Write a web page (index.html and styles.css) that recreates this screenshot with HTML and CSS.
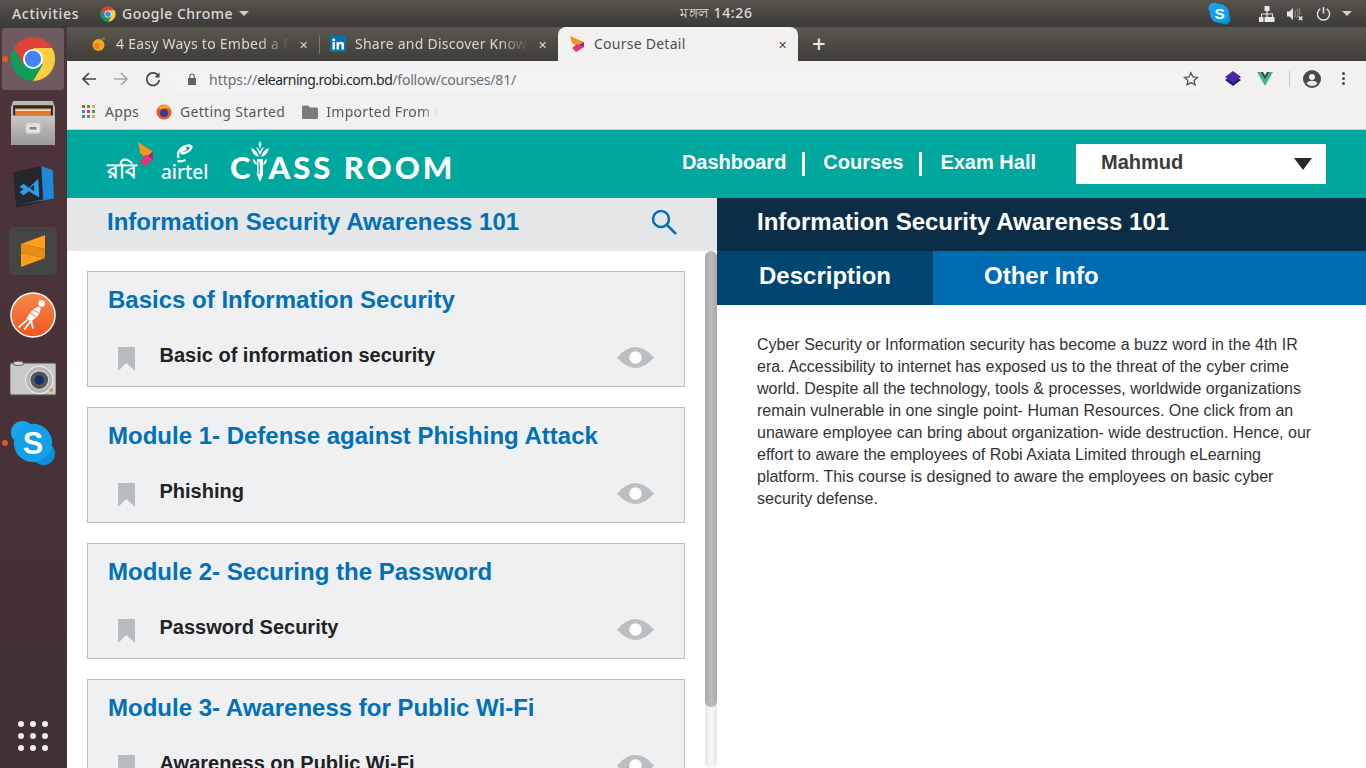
FILE: index.html
```html
<!DOCTYPE html>
<html lang="en">

<head>
    <meta charset="utf-8">
    <title>Course Detail</title>
    <link rel="stylesheet" href="styles.css">
</head>

<body>
    <div class="topbar">
        <span class="activities">Activities</span>
        <span class="appname">
            <svg class="chrome-small" viewBox="0 0 48 48"><use href="#chrome-logo"/></svg>
            Google Chrome
            <i class="caret"></i>
        </span>
        <span class="clock">মঙ্গল 14:26</span>
        <div class="tray">
            <svg class="tray-skype" viewBox="0 0 48 48"><use href="#skype-logo"/><text x="24" y="35" text-anchor="middle" class="skype-s">S</text></svg>
            <svg class="tray-net" viewBox="0 0 16 16" fill="#e8e8e8"><path d="M5.500 0h5v5H8.600v2.500H14V11h1.500v5h-5v-5H13V8.500H8.600V11H10.500v5h-5v-5h1.900V8.500H3V11h1.500v5h-5v-5H2V7.500h5.400V5H5.500z"/></svg>
            <svg class="tray-sound" viewBox="0 0 20 16"><path d="M0 5h3l4-4v14l-4-4H0z" fill="#e8e8e8"/><path d="M9 4q2 4 0 8M11.500 2q3 6 0 11M14 1q2 4 1 8" stroke="#8a8a84" stroke-width="1.300" fill="none"/><path d="M14 11l4 4M18 11l-4 4" stroke="#e8e8e8" stroke-width="1.800"/></svg>
            <svg class="tray-power" viewBox="0 0 16 16" fill="none" stroke="#e8e8e8" stroke-width="1.500"><path d="M4.500 3a6.500 6.500 0 1 0 7 0M8 1v7"/></svg>
            <i class="caret"></i>
        </div>
    </div>

    <div class="desktop">
        <div class="dock">
            <div class="dock-item active">
                <i class="running"></i>
                <svg class="dock-icon" viewBox="0 0 48 48"><use href="#chrome-logo"/></svg>
            </div>
            <div class="dock-item">
                <svg class="dock-icon" viewBox="0 0 44 44">
                    <defs><linearGradient id="cabinet" x1="0" y1="0" x2="0" y2="1"><stop offset="0" stop-color="#c9c8c6"/><stop offset="1" stop-color="#9c9a98"/></linearGradient></defs>
                    <path d="M3 1h38l2 6v36H1V7z" fill="#b9b8b6"/>
                    <rect x="3" y="5" width="38" height="10" fill="#2b2a28"/>
                    <rect x="5" y="8" width="34" height="7" fill="#e2792f"/>
                    <rect x="5" y="9" width="34" height="1.500" fill="#f6e3c8"/>
                    <rect x="1" y="15" width="42" height="28" rx="2" fill="url(#cabinet)"/>
                    <rect x="15" y="22" width="14" height="10" rx="2" fill="#dcdbd9"/>
                    <rect x="18" y="25" width="8" height="4" fill="#8b8987" stroke="#fff"/>
                </svg>
            </div>
            <div class="dock-item">
                <svg class="dock-icon" viewBox="0 0 44 44">
                    <path d="M3 8l27-6 1 34-25 6z" fill="#25282b"/>
                    <path d="M30 2l11 4 1 27-34 6 24-5z" fill="#1f88d8"/>
                    <path d="M9 22l4-3 5 4 9-9 1 18-10-6-5 4-4-3 4-3z" fill="#2f9ae8"/>
                    <path d="M23 20v6l-4-3z" fill="#25282b"/>
                </svg>
            </div>
            <div class="dock-item">
                <div class="sublime-tile">
                    <svg viewBox="0 0 48 48">
                        <path d="M12 17L36 8v14z" fill="#ff9d1c"/>
                        <path d="M12 17v9l24 5v-9z" fill="#e88c18"/>
                        <path d="M12 26l24 5-24 9z" fill="#ff9d1c"/>
                    </svg>
                </div>
            </div>
            <div class="dock-item">
                <svg class="dock-icon" viewBox="0 0 48 48">
                    <defs><linearGradient id="postman" x1="0" y1="0" x2="0" y2="1"><stop offset="0" stop-color="#f58a4a"/><stop offset="1" stop-color="#f1541f"/></linearGradient></defs>
                    <circle cx="24" cy="24" r="23" fill="url(#postman)" stroke="#fff" stroke-width="1.500"/>
                    <circle cx="33" cy="12" r="3.500" fill="#fff"/>
                    <path d="M30 15q-6 2-10 8l-3 5 5 3 7-6q3-4 3-8z" fill="#fff"/>
                    <path d="M21 17l9 5M19 20l8 6" stroke="#f4733a" stroke-width="1"/>
                    <path d="M18 29L9 37M21 31l-6 8M22 30l2 8" stroke="#fff" stroke-width="1.800" fill="none"/>
                </svg>
            </div>
            <div class="dock-item">
                <svg class="dock-icon" viewBox="0 0 44 44">
                    <rect x="0" y="7" width="44" height="30" rx="2" fill="#c9c9c9" stroke="#7a7a7a"/>
                    <ellipse cx="8" cy="7" rx="5" ry="2" fill="#d8d8d8" stroke="#666"/>
                    <circle cx="28" cy="23" r="13" fill="#b5b5b5" stroke="#eee"/>
                    <circle cx="28" cy="23" r="9" fill="#555" stroke="#ddd"/>
                    <circle cx="28" cy="23" r="4.500" fill="#0c2f6e"/>
                    <rect x="38" y="31" width="3" height="3" fill="#e09020"/>
                </svg>
            </div>
            <div class="dock-item">
                <i class="running"></i>
                <svg class="dock-icon" viewBox="0 0 48 48"><use href="#skype-logo"/><text x="24" y="35" text-anchor="middle" class="skype-s">S</text></svg>
            </div>
            <div class="dock-grid">
                <i></i><i></i><i></i><i></i><i></i><i></i><i></i><i></i><i></i>
            </div>
        </div>

        <div class="browser">
            <div class="tabstrip">
                <div class="tab tab-first">
                    <svg class="favicon" viewBox="0 0 16 16"><circle cx="7.500" cy="9" r="6" fill="#f5a623"/><circle cx="6" cy="10" r="3" fill="#ef7d1a"/><path d="M9 3q3-2 6-1-2 3-6 1z" fill="#6a9a2a"/></svg>
                    <span class="tab-title">4 Easy Ways to Embed a P</span>
                    <span class="tab-close">✕</span>
                </div>
                <div class="tab">
                    <svg class="favicon" viewBox="0 0 16 16"><rect width="16" height="16" fill="#0073b1"/><rect x="2.500" y="6" width="2.500" height="7.500" fill="#fff"/><circle cx="3.700" cy="3.700" r="1.500" fill="#fff"/><path d="M6.500 6H9v1q1-1.300 2.500-1.200 2.500.1 2.500 3v4.700h-2.500V9.500q0-1.600-1.300-1.600-1.200 0-1.200 1.600v4H6.500z" fill="#fff"/></svg>
                    <span class="tab-title">Share and Discover Know</span>
                    <span class="tab-close">✕</span>
                </div>
                <div class="tab tab-active">
                    <svg class="favicon" viewBox="0 0 16 16"><use href="#robi-mark"/></svg>
                    <span class="tab-title">Course Detail</span>
                    <span class="tab-close">✕</span>
                </div>
                <span class="new-tab">+</span>
            </div>

            <div class="toolbar">
                <svg class="tool" viewBox="0 0 16 16" fill="none" stroke="#454545" stroke-width="1.700"><path d="M15 8H2M8 2L2 8l6 6"/></svg>
                <svg class="tool" viewBox="0 0 16 16" fill="none" stroke="#a9a9a9" stroke-width="1.700"><path d="M1 8h13M8 2l6 6-6 6"/></svg>
                <svg class="tool" viewBox="0 0 16 16" fill="none" stroke="#454545" stroke-width="1.700"><path d="M13.500 5A6.300 6.300 0 1 0 14.300 9"/><path d="M14.500 1.500v5h-5z" fill="#454545" stroke="none"/></svg>
                <div class="omnibox">
                    <svg class="lock" viewBox="0 0 10 12" fill="#5f6368"><path d="M1 5h8v7H1z"/><path d="M2.800 5V3.200a2.200 2.200 0 0 1 4.400 0V5" fill="none" stroke="#5f6368" stroke-width="1.200"/></svg>
                    <span class="url">https://<b>elearning.robi.com.bd</b><span class="url-path">/follow/courses/81/</span></span>
                    <svg class="star" viewBox="0 0 16 16" fill="none" stroke="#555" stroke-width="1.300"><path d="M8 1.800l1.900 4.100 4.500.5-3.300 3 .9 4.400L8 11.600l-4 2.200.9-4.400-3.300-3 4.500-.5z"/></svg>
                </div>
                <svg class="ext-stack" viewBox="0 0 16 16"><path d="M8 4l8 5-8 6-8-6z" fill="#241a6b"/><path d="M8 0l8 6-8 6-8-6z" fill="#4b27a8"/></svg>
                <svg class="ext-vue" viewBox="0 0 16 14"><path d="M0 0h3.500L8 8l4.500-8H16L8 14z" fill="#41b883"/><path d="M3.500 0H6l2 3.500L10 0h2.500L8 8z" fill="#35495e"/></svg>
                <i class="tool-sep"></i>
                <svg class="avatar" viewBox="0 0 18 18"><circle cx="9" cy="9" r="9" fill="#4a4a4a"/><circle cx="9" cy="7" r="3" fill="#f2f1f0"/><path d="M3.500 13.500Q5 10.800 9 10.800t5.500 2.700Q12 16 9 16t-5.500-2.500z" fill="#f2f1f0"/></svg>
                <span class="menu-dots"><i></i><i></i><i></i></span>
            </div>

            <div class="bookmarks">
                <span class="bookmark">
                    <span class="apps-grid">
                        <i class="r"></i><i class="g"></i><i class="y"></i>
                        <i class="b"></i><i class="r"></i><i class="g"></i>
                        <i class="g"></i><i class="b"></i><i class="y"></i>
                    </span>
                    Apps
                </span>
                <span class="bookmark">
                    <svg class="bm-icon" viewBox="0 0 16 16"><circle cx="8" cy="8" r="7.500" fill="#e8562a"/><circle cx="8" cy="9" r="4" fill="#3b3f8f"/><path d="M2 4q3-3.500 8-3 4 1 5 6-2-3-5-3-3 1-5 1z" fill="#f9a825"/></svg>
                    Getting Started
                </span>
                <span class="bookmark bookmark-fade">
                    <svg class="bm-icon" viewBox="0 0 16 14" fill="#7b7b7b"><path d="M0 2q0-1.500 1.500-1.500H6L8 2.500h6.500Q16 2.500 16 4v8.500q0 1.500-1.500 1.500h-13Q0 14 0 12.500z"/></svg>
                    Imported From F
                </span>
            </div>

            <div class="site">
                <div class="site-header">
                    <div class="logo">
                        <div class="logo-robi">
                            <svg class="robi-mark" viewBox="0 0 16 16" preserveAspectRatio="none"><use href="#robi-mark"/></svg>
                            <span class="robi-name">রবি</span>
                        </div>
                        <div class="logo-airtel">
                            <svg class="airtel-swoosh" viewBox="0 0 18 20" fill="none" stroke="#fff" stroke-width="2.400"><path d="M3 14Q1 7 8 3q6-3 8 0-1 4-7 6-3 1-3-1 1-3 5-3"/><path d="M2 17q4 1 8-1"/></svg>
                            <span class="airtel-name">airtel</span>
                        </div>
                        <div class="logo-class">
                            C<svg class="pencil" viewBox="0 0 20 42" fill="#fff"><path d="M7 18h6v16l-3 7-3-7z"/><path d="M8.500 21h1.200v12H8.500z" fill="#00a79d"/><path d="M10 14L6 6q3 1 4 5 1-4 4-5z"/><path d="M9 16Q3 15 1 7q6 2 8 9zM11 16q6-1 8-9-6 2-8 9z"/><path d="M10 8L8.500 3 10 0l1.500 3z"/><path d="M3 18q3 1 4 6-4-1-4-6zM17 18q-3 1-4 6 4-1 4-6z"/></svg>ASS ROOM
                        </div>
                    </div>
                    <nav class="nav">
                        <a>Dashboard</a>
                        <a>Courses</a>
                        <a>Exam Hall</a>
                    </nav>
                    <div class="user-select">
                        Mahmud
                        <i class="user-arrow"></i>
                    </div>
                </div>

                <div class="course">
                    <div class="left">
                        <div class="left-head">
                            <h2>Information Security Awareness 101</h2>
                            <svg class="search" viewBox="0 0 26 26" fill="none" stroke="#0071b9" stroke-width="2.500"><circle cx="10" cy="10" r="8"/><path d="M16 16l9 9"/></svg>
                        </div>
                        <div class="left-body">
                            <div class="modules">
                                <div class="module">
                                    <h3>Basics of Information Security</h3>
                                    <div class="lesson">
                                        <svg class="mark"><use href="#bookmark"/></svg>
                                        <span>Basic of information security</span>
                                        <svg class="eye"><use href="#eye"/></svg>
                                    </div>
                                </div>
                                <div class="module">
                                    <h3>Module 1- Defense against Phishing Attack</h3>
                                    <div class="lesson">
                                        <svg class="mark"><use href="#bookmark"/></svg>
                                        <span>Phishing</span>
                                        <svg class="eye"><use href="#eye"/></svg>
                                    </div>
                                </div>
                                <div class="module">
                                    <h3>Module 2- Securing the Password</h3>
                                    <div class="lesson">
                                        <svg class="mark"><use href="#bookmark"/></svg>
                                        <span>Password Security</span>
                                        <svg class="eye"><use href="#eye"/></svg>
                                    </div>
                                </div>
                                <div class="module">
                                    <h3>Module 3- Awareness for Public Wi-Fi</h3>
                                    <div class="lesson">
                                        <svg class="mark"><use href="#bookmark"/></svg>
                                        <span>Awareness on Public Wi-Fi</span>
                                        <svg class="eye"><use href="#eye"/></svg>
                                    </div>
                                </div>
                            </div>
                            <div class="scroll-track"><div class="scroll-thumb"></div></div>
                        </div>
                    </div>

                    <div class="right">
                        <div class="right-head">Information Security Awareness 101</div>
                        <div class="right-tabs">
                            <div class="right-tab selected">Description</div>
                            <div class="right-tab">Other Info</div>
                        </div>
                        <p class="desc">Cyber Security or Information security has become a buzz word in the 4th IR era. Accessibility to internet has exposed us to the threat of the cyber crime world. Despite all the technology, tools &amp; processes, worldwide organizations remain vulnerable in one single point- Human Resources. One click from an unaware employee can bring about organization- wide destruction. Hence, our effort to aware the employees of Robi Axiata Limited through eLearning platform. This course is designed to aware the employees on basic cyber security defense.</p>
                    </div>
                </div>
            </div>
        </div>
    </div>

    <svg class="defs" width="0" height="0">
        <symbol id="chrome-logo" viewBox="0 0 48 48">
            <path d="M4.100 12.500A23 23 0 0 1 43.900 12.500H24L14 29.750z" fill="#db4437"/>
            <path d="M43.900 12.500A23 23 0 0 1 24 47L34 29.750 24 12.500z" fill="#ffcd40"/>
            <path d="M24 47A23 23 0 0 1 4.100 12.500L14 29.750H34z" fill="#0f9d58"/>
            <circle cx="24" cy="24" r="10.500" fill="#fff"/>
            <circle cx="24" cy="24" r="8.500" fill="#4285f4"/>
        </symbol>
        <symbol id="skype-logo" viewBox="0 0 48 48">
            <circle cx="13" cy="13" r="12" fill="#1ba6ea"/>
            <circle cx="35" cy="35" r="12" fill="#0b8fdc"/>
            <circle cx="24" cy="24" r="20" fill="#12a0e6"/>
        </symbol>
        <symbol id="robi-mark" viewBox="0 0 16 16">
            <path d="M1 0l14 6-7 4-5-3z" fill="#f7941d"/>
            <path d="M15 6v5L8 10z" fill="#8e2f7c"/>
            <path d="M3 12l5-4 7 3-8 5z" fill="#e6317c"/>
        </symbol>
        <symbol id="bookmark" viewBox="0 0 17 24">
            <path d="M0 0h17v24l-8.500-8L0 24z" fill="#b9bcbf"/>
        </symbol>
        <symbol id="eye" viewBox="0 0 37 21">
            <path d="M0 10.500Q9 0 18.500 0T37 10.500Q28 21 18.500 21T0 10.500z" fill="#bcbfc1"/>
            <circle cx="18.500" cy="10.500" r="6.200" fill="#fff"/>
        </symbol>
    </svg>
</body>

</html>
```

FILE: styles.css
```css
*{
    box-sizing: border-box;
}

html, body{
    margin: 0;
    height: 768px;
    overflow: hidden;
}

body{
    font-family: "Liberation Sans", Arial, sans-serif;
    background-color: #fff;
}

i{
    display: block;
}

.defs{
    display: block;
    height: 0;
}

.skype-s{
    font-family: "Liberation Sans", Arial, sans-serif;
    font-size: 32px;
    font-weight: bold;
    fill: #fff;
}

/* ubuntu top bar */
.topbar{
    height: 27px;
    display: flex;
    align-items: center;
    position: relative;
    padding-left: 12px;
    background: linear-gradient(#57544c, #3b3a35);
    color: #dcdcd8;
    font-family: "Noto Sans", sans-serif;
    font-size: 14px;
    font-weight: 500;
}

.activities{
    width: 88px;
    letter-spacing: 0.7px;
}

.appname{
    display: flex;
    align-items: center;
    letter-spacing: 0.5px;
}

.chrome-small{
    width: 16px;
    height: 16px;
    margin-right: 6px;
}

.caret{
    width: 0;
    height: 0;
    margin-left: 6px;
    border-left: 5px solid transparent;
    border-right: 5px solid transparent;
    border-top: 5px solid #d0d0cc;
}

.clock{
    position: absolute;
    left: 680px;
    top: 2px;
    font-size: 14px;
    letter-spacing: 0.7px;
}

.tray{
    margin-left: auto;
    display: flex;
    align-items: center;
    padding-right: 14px;
}

.tray-skype{
    width: 23px;
    height: 23px;
    margin-right: 28px;
}

.tray-net{
    width: 16px;
    height: 16px;
    margin-right: 12px;
}

.tray-sound{
    width: 17px;
    height: 16px;
    margin-right: 12px;
}

.tray-power{
    width: 15px;
    height: 15px;
    margin-right: 5px;
}

/* launcher */
.desktop{
    display: flex;
    height: 741px;
}

.dock{
    width: 67px;
    flex-shrink: 0;
    display: flex;
    flex-direction: column;
    background: linear-gradient(#4e333a, #413137);
}

.dock-item{
    height: 64px;
    padding-right: 1px;
    display: flex;
    align-items: center;
    justify-content: center;
    position: relative;
}

.dock-item.active{
    width: 62px;
    margin-left: 2px;
    height: 62px;
    margin-top: 1px;
    margin-bottom: 1px;
    padding-right: 0;
    border-radius: 3px;
    background-color: #6f5a5e;
}

.dock-icon{
    width: 46px;
    height: 46px;
}

.running{
    position: absolute;
    left: 2px;
    top: 50%;
    width: 6px;
    height: 6px;
    margin-top: -3px;
    border-radius: 50%;
    background-color: #e95420;
}

.dock-item.active .running{
    left: 0;
}

.sublime-tile{
    width: 48px;
    height: 48px;
    border-radius: 5px;
    background-color: #454544;
}

.sublime-tile svg{
    display: block;
    width: 48px;
    height: 48px;
}

.dock-grid{
    margin-top: auto;
    margin-left: 18px;
    margin-bottom: 17px;
    width: 30px;
    display: grid;
    grid-template-columns: repeat(3, 6px);
    gap: 6px;
}

.dock-grid i{
    width: 6px;
    height: 6px;
    border-radius: 50%;
    background-color: #eee;
}

/* chrome */
.browser{
    flex: 1;
    min-width: 0;
    display: flex;
    flex-direction: column;
}

.tabstrip{
    height: 34px;
    flex-shrink: 0;
    display: flex;
    align-items: flex-end;
    padding-left: 14px;
    background: linear-gradient(#5b584f, #3e3d37);
    font-family: "Noto Sans", sans-serif;
    font-size: 14px;
    letter-spacing: 0.25px;
    color: #dad9d5;
}

.tab{
    width: 239px;
    height: 34px;
    display: flex;
    align-items: center;
    padding: 0 9px 0 10px;
    position: relative;
}

.tab-first::after{
    content: "";
    position: absolute;
    right: 0;
    top: 8px;
    width: 1px;
    height: 19px;
    background-color: #77756d;
}

.favicon{
    width: 16px;
    height: 16px;
    flex-shrink: 0;
    margin-right: 9px;
}

.tab-title{
    flex: 1;
    margin-top: -2px;
    white-space: nowrap;
    -webkit-mask-image: linear-gradient(90deg, #000 80%, transparent 97%);
    mask-image: linear-gradient(90deg, #000 80%, transparent 97%);
}

.tab-close{
    width: 16px;
    font-size: 11px;
    letter-spacing: 0;
    text-align: center;
    color: #d5d4d0;
}

.tab-active{
    width: 240px;
    margin-left: -1px;
    border-radius: 8px 8px 0 0;
    background-color: #f2f1f0;
    color: #4a4f55;
    padding-left: 11px;
    padding-right: 8px;
}

.tab-active .tab-title{
    -webkit-mask-image: none;
    mask-image: none;
}

.tab-active .tab-close{
    color: #4a4a4a;
}

.new-tab{
    height: 34px;
    margin-left: 14px;
    font-size: 24px;
    line-height: 33px;
    font-weight: 500;
    color: #e8e8e6;
}

.toolbar{
    height: 35px;
    flex-shrink: 0;
    display: flex;
    align-items: center;
    padding-left: 14px;
    background-color: #f2f1f0;
}

.tool{
    width: 16px;
    height: 16px;
    margin-right: 16px;
}

.omnibox{
    width: 1042px;
    height: 26px;
    margin-left: -11px;
    padding: 0 9px 0 21px;
    display: flex;
    align-items: center;
    border-radius: 13px;
    background-color: #f1f3f4;
}

.lock{
    width: 10px;
    height: 12px;
    margin-right: 12px;
}

.url{
    flex: 1;
    padding-top: 1px;
    font-family: "Noto Sans", sans-serif;
    font-size: 14px;
    color: #6b7074;
}

.url b{
    font-weight: normal;
    color: #25282b;
    letter-spacing: -0.5px;
}

.url-path{
    letter-spacing: -0.2px;
}

.star{
    width: 16px;
    height: 16px;
    margin-right: 0;
}

.ext-stack{
    width: 16px;
    height: 16px;
    margin-left: 17px;
}

.ext-vue{
    width: 16px;
    height: 14px;
    margin-left: 16px;
}

.tool-sep{
    width: 1px;
    height: 16px;
    margin-left: 16px;
    background-color: #c8c8c6;
}

.avatar{
    width: 18px;
    height: 18px;
    margin-left: 13px;
}

.menu-dots{
    margin-left: 21px;
    display: flex;
    flex-direction: column;
    gap: 2px;
}

.menu-dots i{
    width: 3px;
    height: 3px;
    border-radius: 50%;
    background-color: #4a4a4a;
}

.bookmarks{
    height: 34px;
    flex-shrink: 0;
    display: flex;
    align-items: center;
    padding: 0 0 2px 15px;
    background-color: #f2f1f0;
    border-bottom: 1px solid #d0d0ce;
    font-family: "Noto Sans", sans-serif;
    font-size: 14px;
    letter-spacing: 0.3px;
    color: #555a5e;
}

.bookmark{
    display: flex;
    align-items: center;
    margin-right: 17px;
    white-space: nowrap;
}

.bookmark-fade{
    width: 136px;
    -webkit-mask-image: linear-gradient(90deg, #000 88%, transparent 100%);
    mask-image: linear-gradient(90deg, #000 88%, transparent 100%);
}

.apps-grid{
    width: 14px;
    display: grid;
    grid-template-columns: repeat(3, 3px);
    gap: 2px;
    margin-right: 9px;
}

.apps-grid i{
    height: 3px;
}

.apps-grid .r{ background-color: #e0452f; }
.apps-grid .g{ background-color: #2fa55a; }
.apps-grid .y{ background-color: #f4a92a; }
.apps-grid .b{ background-color: #3f7fe0; }

.bm-icon{
    width: 16px;
    height: 16px;
    flex-shrink: 0;
    margin-right: 8px;
}

/* the site */
.site{
    flex: 1;
    min-height: 0;
    display: flex;
    flex-direction: column;
}

.site-header{
    height: 68px;
    flex-shrink: 0;
    display: flex;
    align-items: center;
    padding: 0 40px;
    background-color: #00a79d;
    color: #fff;
}

.logo{
    display: flex;
    align-items: flex-end;
    height: 50px;
    margin-top: -11px;
}

.logo-robi{
    width: 54px;
    display: flex;
    flex-direction: column;
}

.robi-mark{
    width: 17px;
    height: 25px;
    margin-left: 30px;
    margin-bottom: -11px;
}

.robi-name{
    font-family: "Noto Sans", sans-serif;
    font-size: 21px;
    line-height: 28px;
    font-weight: bold;
}

.logo-airtel{
    width: 69px;
    display: flex;
    flex-direction: column;
}

.airtel-swoosh{
    width: 19px;
    height: 20px;
    margin-left: 14px;
    margin-bottom: -3px;
}

.airtel-name{
    font-family: "Noto Sans", sans-serif;
    font-size: 19px;
    line-height: 22px;
    font-weight: 500;
    margin-bottom: 1px;
}

.logo-class{
    display: flex;
    align-items: flex-end;
    font-family: "Lato", sans-serif;
    font-size: 31px;
    line-height: 34px;
    font-weight: 900;
    letter-spacing: 3px;
    white-space: nowrap;
}

.pencil{
    width: 20px;
    height: 42px;
    margin: 0 -2px 1px -3px;
}

.nav{
    margin-left: auto;
    display: flex;
    font-size: 20px;
    font-weight: bold;
}

.nav a{
    height: 24px;
    padding-right: 16px;
    margin-right: 18px;
    border-right: 3px solid #fff;
    line-height: 20px;
}

.nav a:last-child{
    border-right: none;
    padding-right: 0;
    margin-right: 40px;
}

.user-select{
    width: 250px;
    height: 40px;
    display: flex;
    align-items: center;
    justify-content: space-between;
    padding: 0 14px 4px 25px;
    background-color: #fff;
    color: #3d3a3a;
    font-size: 20px;
    font-weight: bold;
}

.user-arrow{
    width: 0;
    height: 0;
    margin-top: 4px;
    border-left: 9px solid transparent;
    border-right: 9px solid transparent;
    border-top: 12px solid #2b2627;
}

.course{
    flex: 1;
    min-height: 0;
    display: flex;
}

.left{
    width: 650px;
    flex-shrink: 0;
    display: flex;
    flex-direction: column;
}

.left-head{
    height: 53px;
    flex-shrink: 0;
    display: flex;
    align-items: center;
    justify-content: space-between;
    padding: 0 40px 5px 40px;
    background-color: #e5e6e8;
}

.left-head h2{
    margin: 0;
    font-size: 24px;
    color: #0071b9;
}

.search{
    width: 26px;
    height: 26px;
}

.left-body{
    flex: 1;
    min-height: 0;
    display: flex;
    overflow: hidden;
}

.modules{
    width: 638px;
    padding: 20px 20px 0 20px;
    display: flex;
    flex-direction: column;
    gap: 20px;
}

.module{
    height: 116px;
    flex-shrink: 0;
    padding: 14px 30px 0 20px;
    border: 1px solid #bbbcbe;
    background-color: #eff0f2;
}

.module h3{
    margin: 0;
    font-size: 24px;
    line-height: 28px;
    color: #0071b9;
}

.lesson{
    height: 30px;
    margin-top: 26px;
    display: flex;
    align-items: center;
    font-size: 20px;
    font-weight: bold;
    color: #222;
}

.mark{
    width: 17px;
    height: 24px;
    margin: 8px 24.5px 0 10px;
    flex-shrink: 0;
}

.eye{
    width: 37px;
    height: 21px;
    margin: 4px 0 0 auto;
    flex-shrink: 0;
}

.scroll-track{
    width: 12px;
    height: 517px;
    border-radius: 6px;
    background: linear-gradient(90deg, #e6e6e6, #f8f8f8 50%, #e6e6e6);
}

.scroll-thumb{
    height: 456px;
    border-radius: 6px;
    background: linear-gradient(90deg, #aaa, #bcbcbc 50%, #aaa);
}

.right{
    flex: 1;
    min-width: 0;
}

.right-head{
    height: 53px;
    padding: 0 40px 5px 40px;
    display: flex;
    align-items: center;
    background-color: #0b2d45;
    color: #fff;
    font-size: 24px;
    font-weight: bold;
}

.right-tabs{
    height: 54px;
    display: flex;
    background-color: #006bb0;
}

.right-tab{
    width: 216px;
    padding-left: 42px;
    padding-bottom: 4px;
    display: flex;
    align-items: center;
    color: #fff;
    font-size: 24px;
    font-weight: bold;
}

.right-tab.selected{
    background-color: #00466f;
}

.right-tab + .right-tab{
    padding-left: 51px;
}

.desc{
    margin: 29px 45px 0 40px;
    font-size: 16px;
    line-height: 22px;
    color: #333;
}
```
